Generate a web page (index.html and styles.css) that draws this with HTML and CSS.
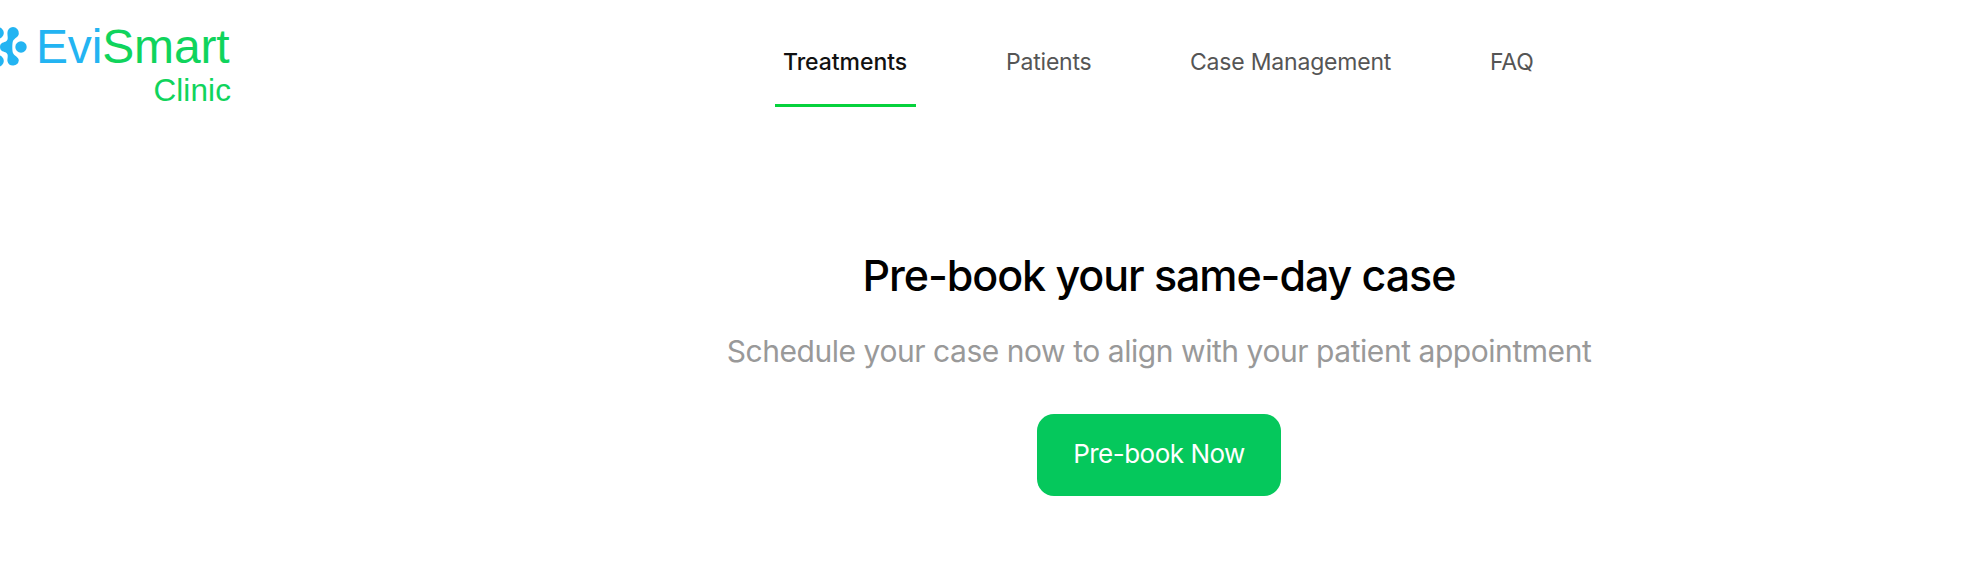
FILE: index.html
```html
<!DOCTYPE html>
<html lang="en">
<head>
<meta charset="utf-8">
<title>EviSmart Clinic</title>
<link rel="stylesheet" href="styles.css">
</head>
<body>
<header class="header">
  <a class="logo">
    <svg class="logo-mark" width="28" height="44" viewBox="0 0 28 44" fill="#23b4f2" aria-hidden="true">
      <circle cx="-2" cy="6" r="5.8"/>
      <circle cx="-2" cy="34" r="5.8"/>
      <path d="M13 0a6 6 0 0 1 5.8 6.4c0 3.600-4.600 4.600-5.800 7.600-.9 2.400-.9 9.600 0 12 1.200 3 5.800 4 5.800 7.600A5.800 5.800 0 0 1 7.400 34c0-3.800 1.300-6.400-1.200-8.200C4.300 24.400 0 24.800 0 20s4.300-4.400 6.200-5.800C8.700 12.400 7.400 9.800 7.400 6A5.800 5.800 0 0 1 13 0z"/>
      <circle cx="21" cy="20" r="5.700"/>
    </svg>
    <span class="logo-text">
      <span class="logo-name"><span class="logo-evi">Evi</span>Smart</span>
      <span class="logo-sub">Clinic</span>
    </span>
  </a>
  <nav class="nav">
    <a class="nav-item nav-active">Treatments</a>
    <a class="nav-item nav-patients">Patients</a>
    <a class="nav-item nav-cases">Case Management</a>
    <a class="nav-item nav-faq">FAQ</a>
  </nav>
</header>
<main class="hero">
  <h1 class="hero-title">Pre-book your same-day case</h1>
  <p class="hero-text">Schedule your case now to align with your patient appointment</p>
  <button class="hero-button">Pre-book Now</button>
</main>
</body>
</html>
```
FILE: styles.css
```css
* { box-sizing: border-box; }
body {
  margin: 0;
  background: #fff;
  font-family: Inter, "Liberation Sans", sans-serif;
  overflow: hidden;
}
.header { display: flex; height: 107px; }
.logo {
  display: flex;
  width: 775px;
  padding-top: 27px;
  font-family: "Liberation Sans", Arial, sans-serif;
  color: #10d45c;
}
.logo-text { display: flex; flex-direction: column; width: 203px; margin-top: -7px; padding-left: 8px; }
.logo-name { font-size: 48px; line-height: 54px; letter-spacing: -0.15px; white-space: nowrap; }
.logo-evi { color: #23b4f2; }
.logo-sub { font-size: 31.5px; line-height: 32px; text-align: right; letter-spacing: 0.1px; }
.nav { display: flex; }
.nav-item {
  height: 107px;
  padding-top: 47px;
  font-size: 23px;
  line-height: 30px;
  letter-spacing: -0.2px;
  color: #555;
  white-space: nowrap;
}
.nav-active {
  width: 141px;
  padding-left: 8px;
  border-bottom: 3px solid #06d23c;
  color: #111;
  font-weight: 500;
  letter-spacing: -0.05px;
}
.nav-patients { width: 184px; margin-left: 90px; }
.nav-cases { width: 300px; }
.hero {
  display: flex;
  flex-direction: column;
  align-items: center;
  margin-left: 346px;
  padding-top: 144px;
}
.hero-title {
  margin: 0;
  font-size: 43px;
  line-height: 48px;
  font-weight: 500;
  letter-spacing: -1.08px;
  color: #000;
}
.hero-text {
  margin: 34px 0 0;
  font-size: 30px;
  line-height: 36px;
  letter-spacing: -0.45px;
  color: #999;
}
.hero-button {
  width: 244px;
  height: 82px;
  margin-top: 45px;
  padding: 0 0 2px;
  border: 0;
  border-radius: 17px;
  background: #05c85c;
  color: #fff;
  font: 400 26px/32px Inter, "Liberation Sans", sans-serif;
  letter-spacing: -0.5px;
}
```
